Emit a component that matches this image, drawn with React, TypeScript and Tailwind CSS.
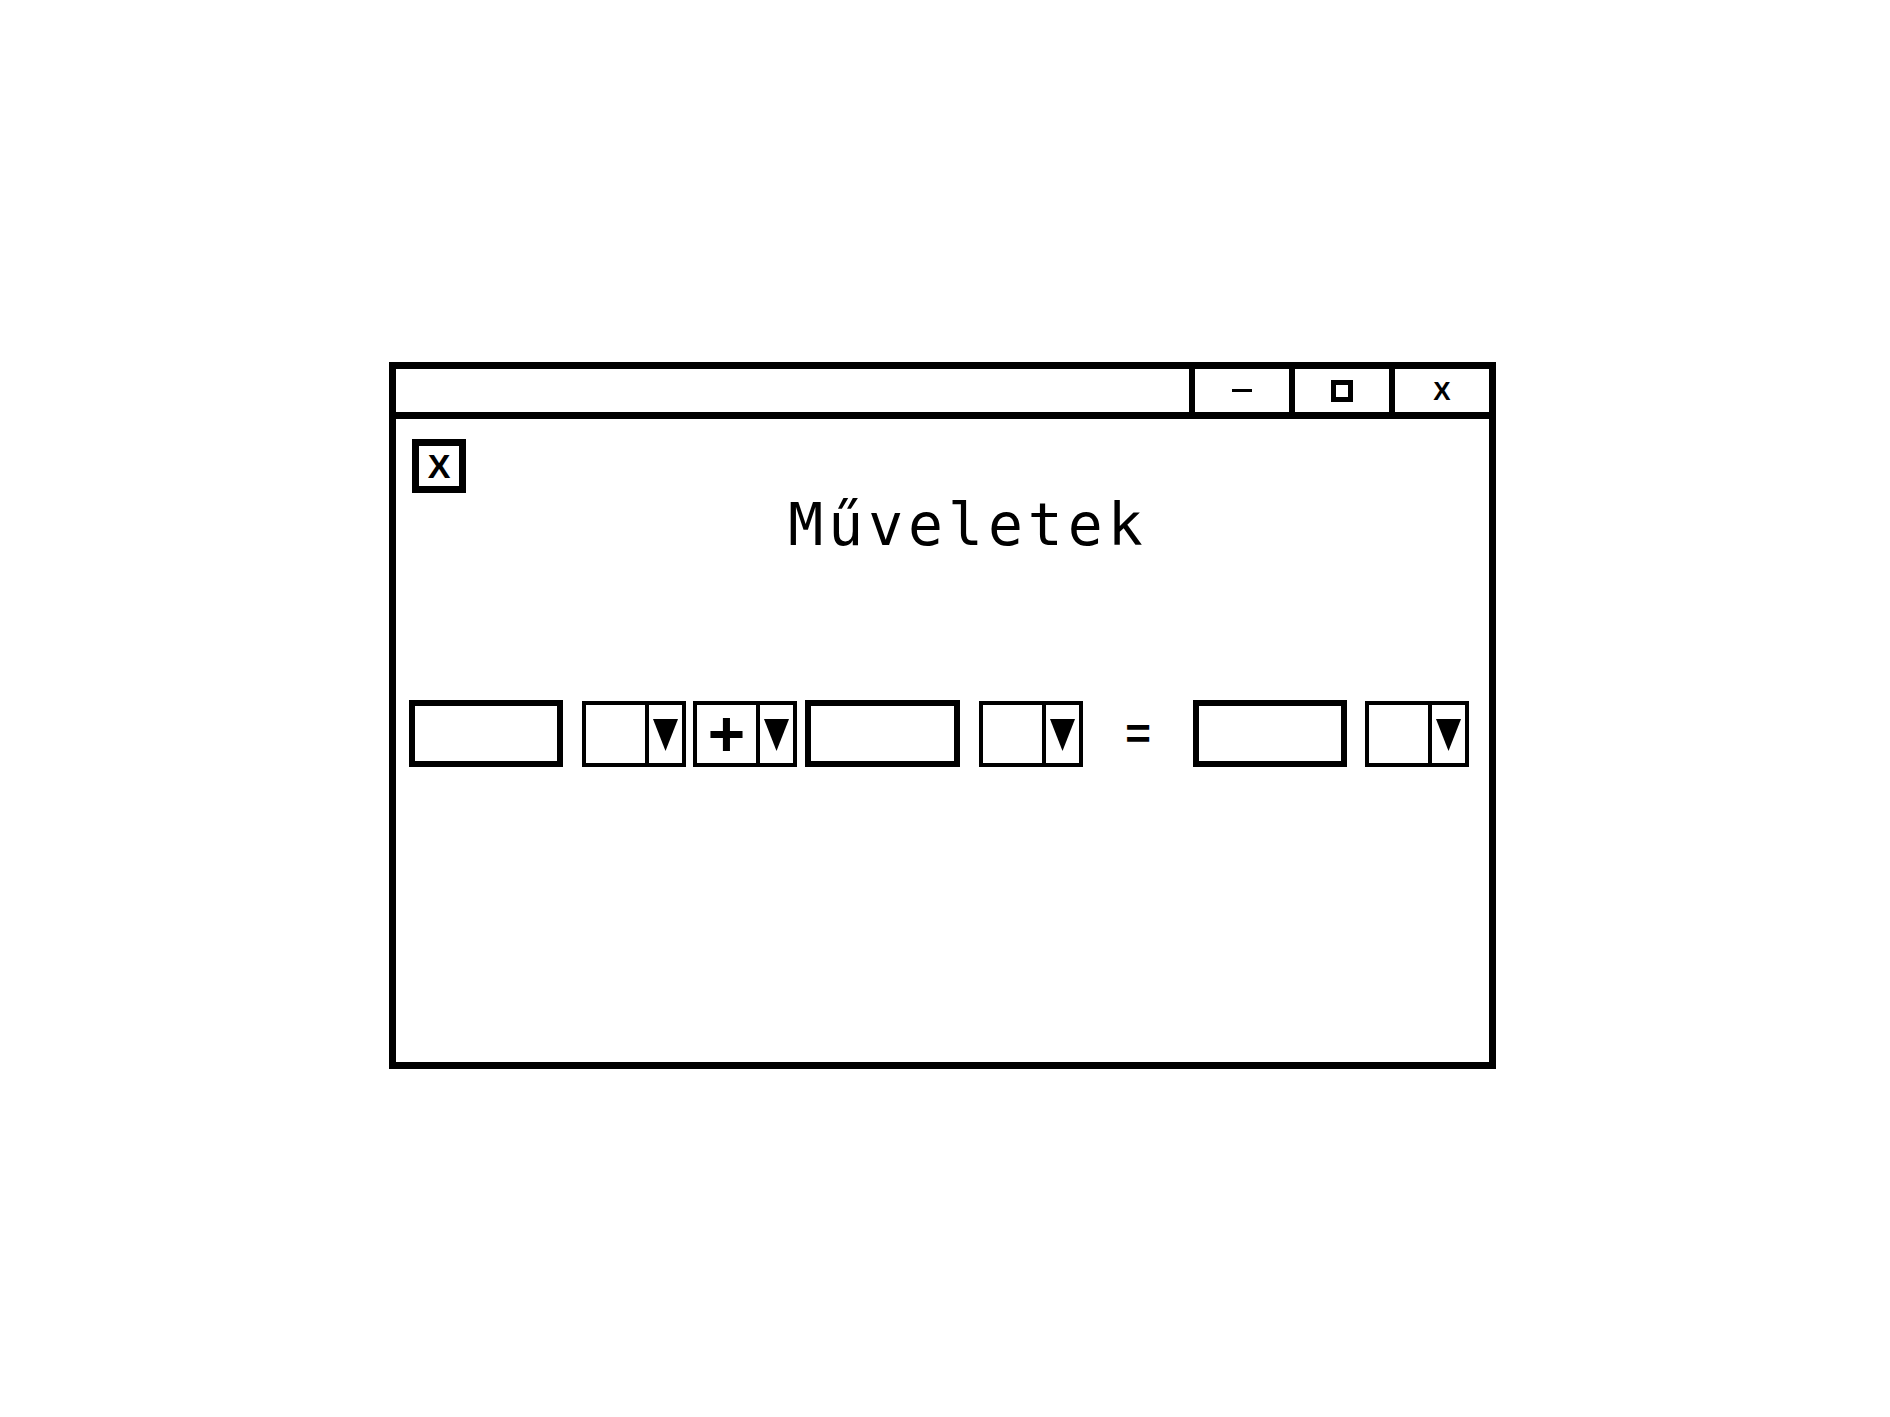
import React from 'react';

const Arrow = () => (
  <svg width="25" height="32" viewBox="0 0 25 32">
    <polygon points="0,0 25,0 12.5,32" fill="#000" />
  </svg>
);

const Dropdown = ({ label }: { label?: string }) => (
  <div className="flex h-[66px] w-[104px] border-[4px] border-black">
    <div className="flex flex-1 items-center justify-center">
      {label && (
        <span className="text-[64px] font-bold leading-none [font-family:'Liberation_Sans',Arial,sans-serif]">
          {label}
        </span>
      )}
    </div>
    <div className="flex w-[37px] items-center justify-center border-l-[4px] border-black pt-[2px]">
      <Arrow />
    </div>
  </div>
);

const Field = ({ width }: { width: string }) => (
  <div className={`${width} h-[67px] border-[6px] border-black`} />
);

const App = () => {
  return (
    <div className="min-h-screen bg-white pl-[389px] pt-[362px] text-black">
      <div className="flex h-[707px] w-[1107px] flex-col border-[7px] border-black">
        {/* title bar */}
        <div className="flex h-[50px] border-b-[7px] border-black">
          <div className="flex-1" />
          <div className="flex w-[100px] items-center justify-center border-l-[6px] border-black">
            <div className="h-[3px] w-[20px] bg-black" />
          </div>
          <div className="flex w-[100px] items-center justify-center border-l-[6px] border-black">
            <div className="h-[22px] w-[22px] border-[5px] border-black" />
          </div>
          <div className="flex w-[100px] items-center justify-center border-l-[6px] border-black">
            <span className="text-[26px] font-bold leading-none [font-family:'Liberation_Sans',Arial,sans-serif]">X</span>
          </div>
        </div>

        {/* content */}
        <div className="flex flex-col pl-[16px] pt-[20px]">
          <div className="flex h-[54px] w-[54px] items-center justify-center border-[7px] border-black">
            <span className="text-[34px] font-bold leading-none [font-family:'Liberation_Sans',Arial,sans-serif]">X</span>
          </div>

          <div className="mt-[3px] flex justify-center pl-[35px]">
            <h1 className="text-[58px] leading-none tracking-[5px] [font-family:'DejaVu_Sans_Mono',monospace]">
              Műveletek
            </h1>
          </div>

          <div className="-ml-[3px] mt-[146px] flex items-center">
            <Field width="w-[154px]" />
            <div className="ml-[19px]">
              <Dropdown />
            </div>
            <div className="ml-[7px]">
              <Dropdown label="+" />
            </div>
            <div className="ml-[8px]">
              <Field width="w-[155px]" />
            </div>
            <div className="ml-[19px]">
              <Dropdown />
            </div>
            <div className="flex w-[110px] justify-center">
              <span className="text-[44px] font-bold leading-none [font-family:'Liberation_Sans',Arial,sans-serif]">=</span>
            </div>
            <Field width="w-[154px]" />
            <div className="ml-[18px]">
              <Dropdown />
            </div>
          </div>
        </div>
      </div>
    </div>
  );
};

export default App;
